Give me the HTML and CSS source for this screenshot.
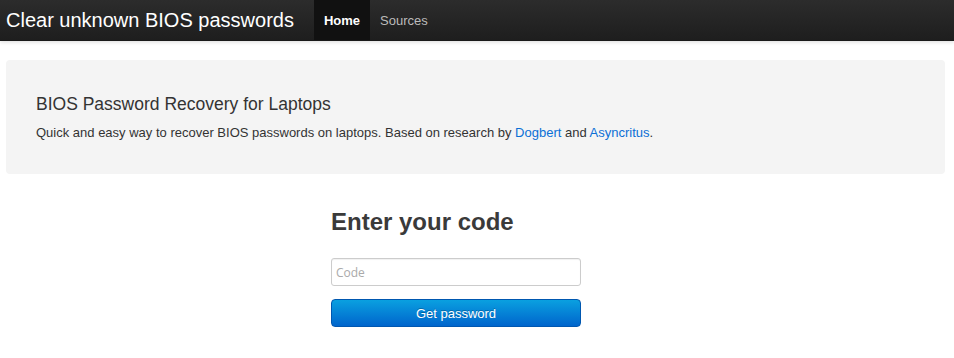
FILE: index.html
```html
<!DOCTYPE html>
<html>
<head>
<meta charset="utf-8">
<link rel="stylesheet" href="styles.css">
</head>
<body>
<div class="navbar">
  <a class="brand" href="#">Clear unknown BIOS passwords</a>
  <ul class="nav">
    <li class="active"><a href="#">Home</a></li>
    <li><a href="#">Sources</a></li>
  </ul>
</div>
<div class="page">
  <div class="well">
    <h3 class="well-title">BIOS Password Recovery for Laptops</h3>
    <p class="well-text">Quick and easy way to recover BIOS passwords on laptops. Based on research by <a href="#">Dogbert</a> and <a href="#">Asyncritus</a>.</p>
  </div>
  <div class="form-col">
    <h2 class="form-title">Enter your code</h2>
    <input class="code-input" type="text" placeholder="Code">
    <button class="btn-primary" type="button">Get password</button>
  </div>
</div>
</body>
</html>
```
FILE: styles.css
```css
html, body {
  margin: 0;
  padding: 0;
  background: #fff;
  font-family: "Liberation Sans", Arial, sans-serif;
  color: #333;
}
.navbar {
  height: 40px;
  display: flex;
  align-items: stretch;
  background: linear-gradient(to bottom, #2c2c2c, #1e1e1e);
  border-bottom: 1px solid #1a1a1a;
  box-shadow: 0 1px 4px rgba(0,0,0,0.15);
}
.brand {
  display: flex;
  align-items: center;
  padding: 0 20px 0 6px;
  font-size: 20px;
  color: #fff;
  text-decoration: none;
  letter-spacing: 0;
}
.nav {
  display: flex;
  list-style: none;
  margin: 0;
  padding: 0;
}
.nav li a {
  display: flex;
  align-items: center;
  height: 40px;
  padding: 0 10px;
  font-size: 13px;
  color: #bbb;
  text-decoration: none;
}
.nav li.active a {
  background: #111;
  color: #fff;
  font-weight: bold;
}
.page {
  padding: 19px 9px 0 6px;
}
.well {
  background: #f4f4f4;
  border-radius: 4px;
  padding: 33px 30px 31px;
  height: 50px;
}
.well-title {
  margin: 0;
  font-size: 17.5px;
  font-weight: normal;
  line-height: 22px;
  color: #333;
}
.well-text {
  margin: 9px 0 0;
  font-size: 13px;
  line-height: 18px;
  color: #333;
}
.well-text a {
  color: #0b6fd6;
  text-decoration: none;
}
.form-col {
  display: flex;
  flex-direction: column;
  width: 250px;
  margin-left: 325px;
  padding-top: 33px;
}
.form-title {
  margin: 0;
  font-size: 24px;
  line-height: 30px;
  font-weight: bold;
  color: #3a3a3a;
}
.code-input {
  margin-top: 21px;
  height: 28px;
  box-sizing: border-box;
  border: 1px solid #ccc;
  border-radius: 3px;
  padding: 0 4px;
  font-family: "Open Sans", sans-serif;
  font-size: 12px;
  color: #555;
  box-shadow: inset 0 1px 1px rgba(0,0,0,0.06);
}
.code-input::placeholder {
  color: #aaa;
}
.btn-primary {
  margin-top: 13px;
  height: 28px;
  border: 1px solid #0057b0;
  border-radius: 4px;
  background: linear-gradient(to bottom, #0aa0e0, #0065cc);
  color: #fff;
  font-family: "Liberation Sans", Arial, sans-serif;
  font-size: 13px;
  text-shadow: 0 -1px 0 rgba(0,0,0,0.25);
  padding: 0;
}
```
